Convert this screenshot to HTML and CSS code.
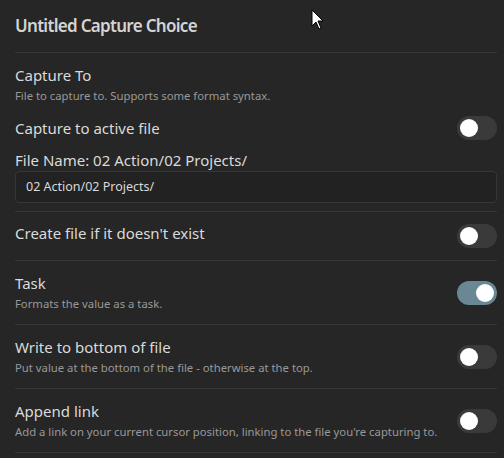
FILE: index.html
```html
<!DOCTYPE html>
<html lang="en">
<head>
<meta charset="utf-8">
<title>Untitled Capture Choice</title>
<link rel="stylesheet" href="styles.css">
</head>
<body>
<div class="modal">
  <h1 class="title">Untitled Capture Choice</h1>

  <div class="block">
    <div class="name">Capture To</div>
    <div class="desc">File to capture to. Supports some format syntax.</div>
  </div>

  <div class="row plain">
    <div class="info"><div class="name">Capture to active file</div></div>
    <div class="toggle"><div class="knob"></div></div>
  </div>

  <div class="filename">
    <div class="name">File Name: 02 Action/02 Projects/</div>
    <div class="input">02 Action/02 Projects/</div>
  </div>

  <div class="row">
    <div class="info lifted"><div class="name">Create file if it doesn't exist</div></div>
    <div class="toggle"><div class="knob"></div></div>
  </div>

  <div class="row">
    <div class="info">
      <div class="name">Task</div>
      <div class="desc">Formats the value as a task.</div>
    </div>
    <div class="toggle on"><div class="knob"></div></div>
  </div>

  <div class="row">
    <div class="info">
      <div class="name">Write to bottom of file</div>
      <div class="desc">Put value at the bottom of the file - otherwise at the top.</div>
    </div>
    <div class="toggle"><div class="knob"></div></div>
  </div>

  <div class="row">
    <div class="info">
      <div class="name">Append link</div>
      <div class="desc">Add a link on your current cursor position, linking to the file you're capturing to.</div>
    </div>
    <div class="toggle"><div class="knob"></div></div>
  </div>
</div>

<svg class="cursor" width="14" height="22" viewBox="0 0 14 22" aria-hidden="true">
  <path d="M1 1 L1 17 L5 13 L8 20 L10 19 L7 12 L12 12 Z" fill="#fff" stroke="#000" stroke-width="1" stroke-linejoin="miter"/>
</svg>
</body>
</html>
```
FILE: styles.css
```css
html, body {
  margin: 0;
  padding: 0;
  background: #262626;
  height: 100%;
  overflow: hidden;
}

body {
  font-family: "Noto Sans", "Open Sans", sans-serif;
  color: #dadada;
}

.modal {
  padding: 0 7px 0 15px;
}

.title {
  margin: 0;
  padding: 14px 0 14px;
  font-size: 17px;
  line-height: 24px;
  font-weight: 600;
  letter-spacing: -0.7px;
  color: #d4d4d4;
  border-bottom: 1px solid #363636;
}

.name {
  font-size: 15px;
  line-height: 21px;
  color: #dadada;
}

.desc {
  margin-top: 1px;
  font-size: 11.3px;
  line-height: 17px;
  color: #999999;
}

.block {
  padding-top: 12px;
}

.block .desc {
  line-height: 18px;
}

.row {
  display: flex;
  align-items: center;
  justify-content: space-between;
  padding: 12px 0;
  border-bottom: 1px solid #363636;
}

.row.plain {
  border-bottom: none;
  padding: 11px 0 10px;
}

.info {
  flex: 1;
  min-width: 0;
}

.info.lifted {
  margin-top: -3px;
  margin-bottom: 3px;
}

.filename {
  padding-bottom: 8px;
  border-bottom: 1px solid #363636;
}

.input {
  box-sizing: border-box;
  height: 32px;
  padding: 0 10px;
  border: 1px solid #363636;
  border-radius: 4px;
  background: #222222;
  font-size: 12.5px;
  line-height: 30px;
  color: #dadada;
}

.toggle {
  flex: none;
  width: 40px;
  height: 24px;
  border-radius: 12px;
  background: #3a3a3a;
  padding: 3px;
  box-sizing: border-box;
  display: flex;
  justify-content: flex-start;
}

.toggle.on {
  background: #6a8794;
  justify-content: flex-end;
}

.knob {
  width: 18px;
  height: 18px;
  border-radius: 50%;
  background: #ffffff;
}

.cursor {
  position: absolute;
  left: 311px;
  top: 9px;
}
```
